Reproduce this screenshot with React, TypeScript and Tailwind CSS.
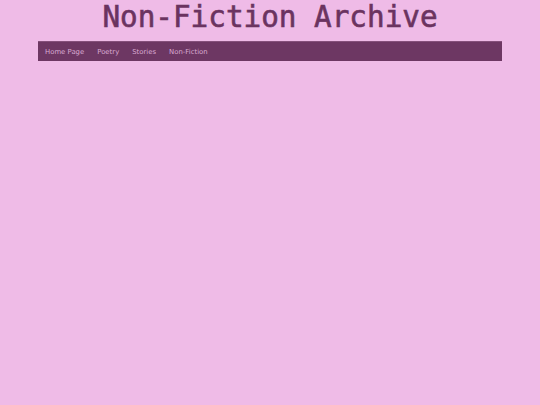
export default function App() {
  const links = ["Home Page", "Poetry", "Stories", "Non-Fiction"];
  return (
    <div className="min-h-[405px] bg-[#efbbe7]">
      <h1
        className="text-center text-[29.3px] leading-[34px] font-normal text-[#6b3360]"
        style={{ fontFamily: '"DejaVu Sans Mono", monospace', WebkitTextStroke: "0.6px #6b3360" }}
      >
        Non-Fiction Archive
      </h1>
      <nav className="mx-[38px] mt-[7px] h-[20px] bg-[#6d3763] border-t border-[#85507b] flex items-center pl-[7px] pt-[2px] gap-[13px]">
        {links.map((l) => (
          <a
            key={l}
            className="text-[6.9px] text-[#d9aad2]"
            style={{ fontFamily: '"DejaVu Sans", sans-serif' }}
          >
            {l}
          </a>
        ))}
      </nav>
    </div>
  );
}
